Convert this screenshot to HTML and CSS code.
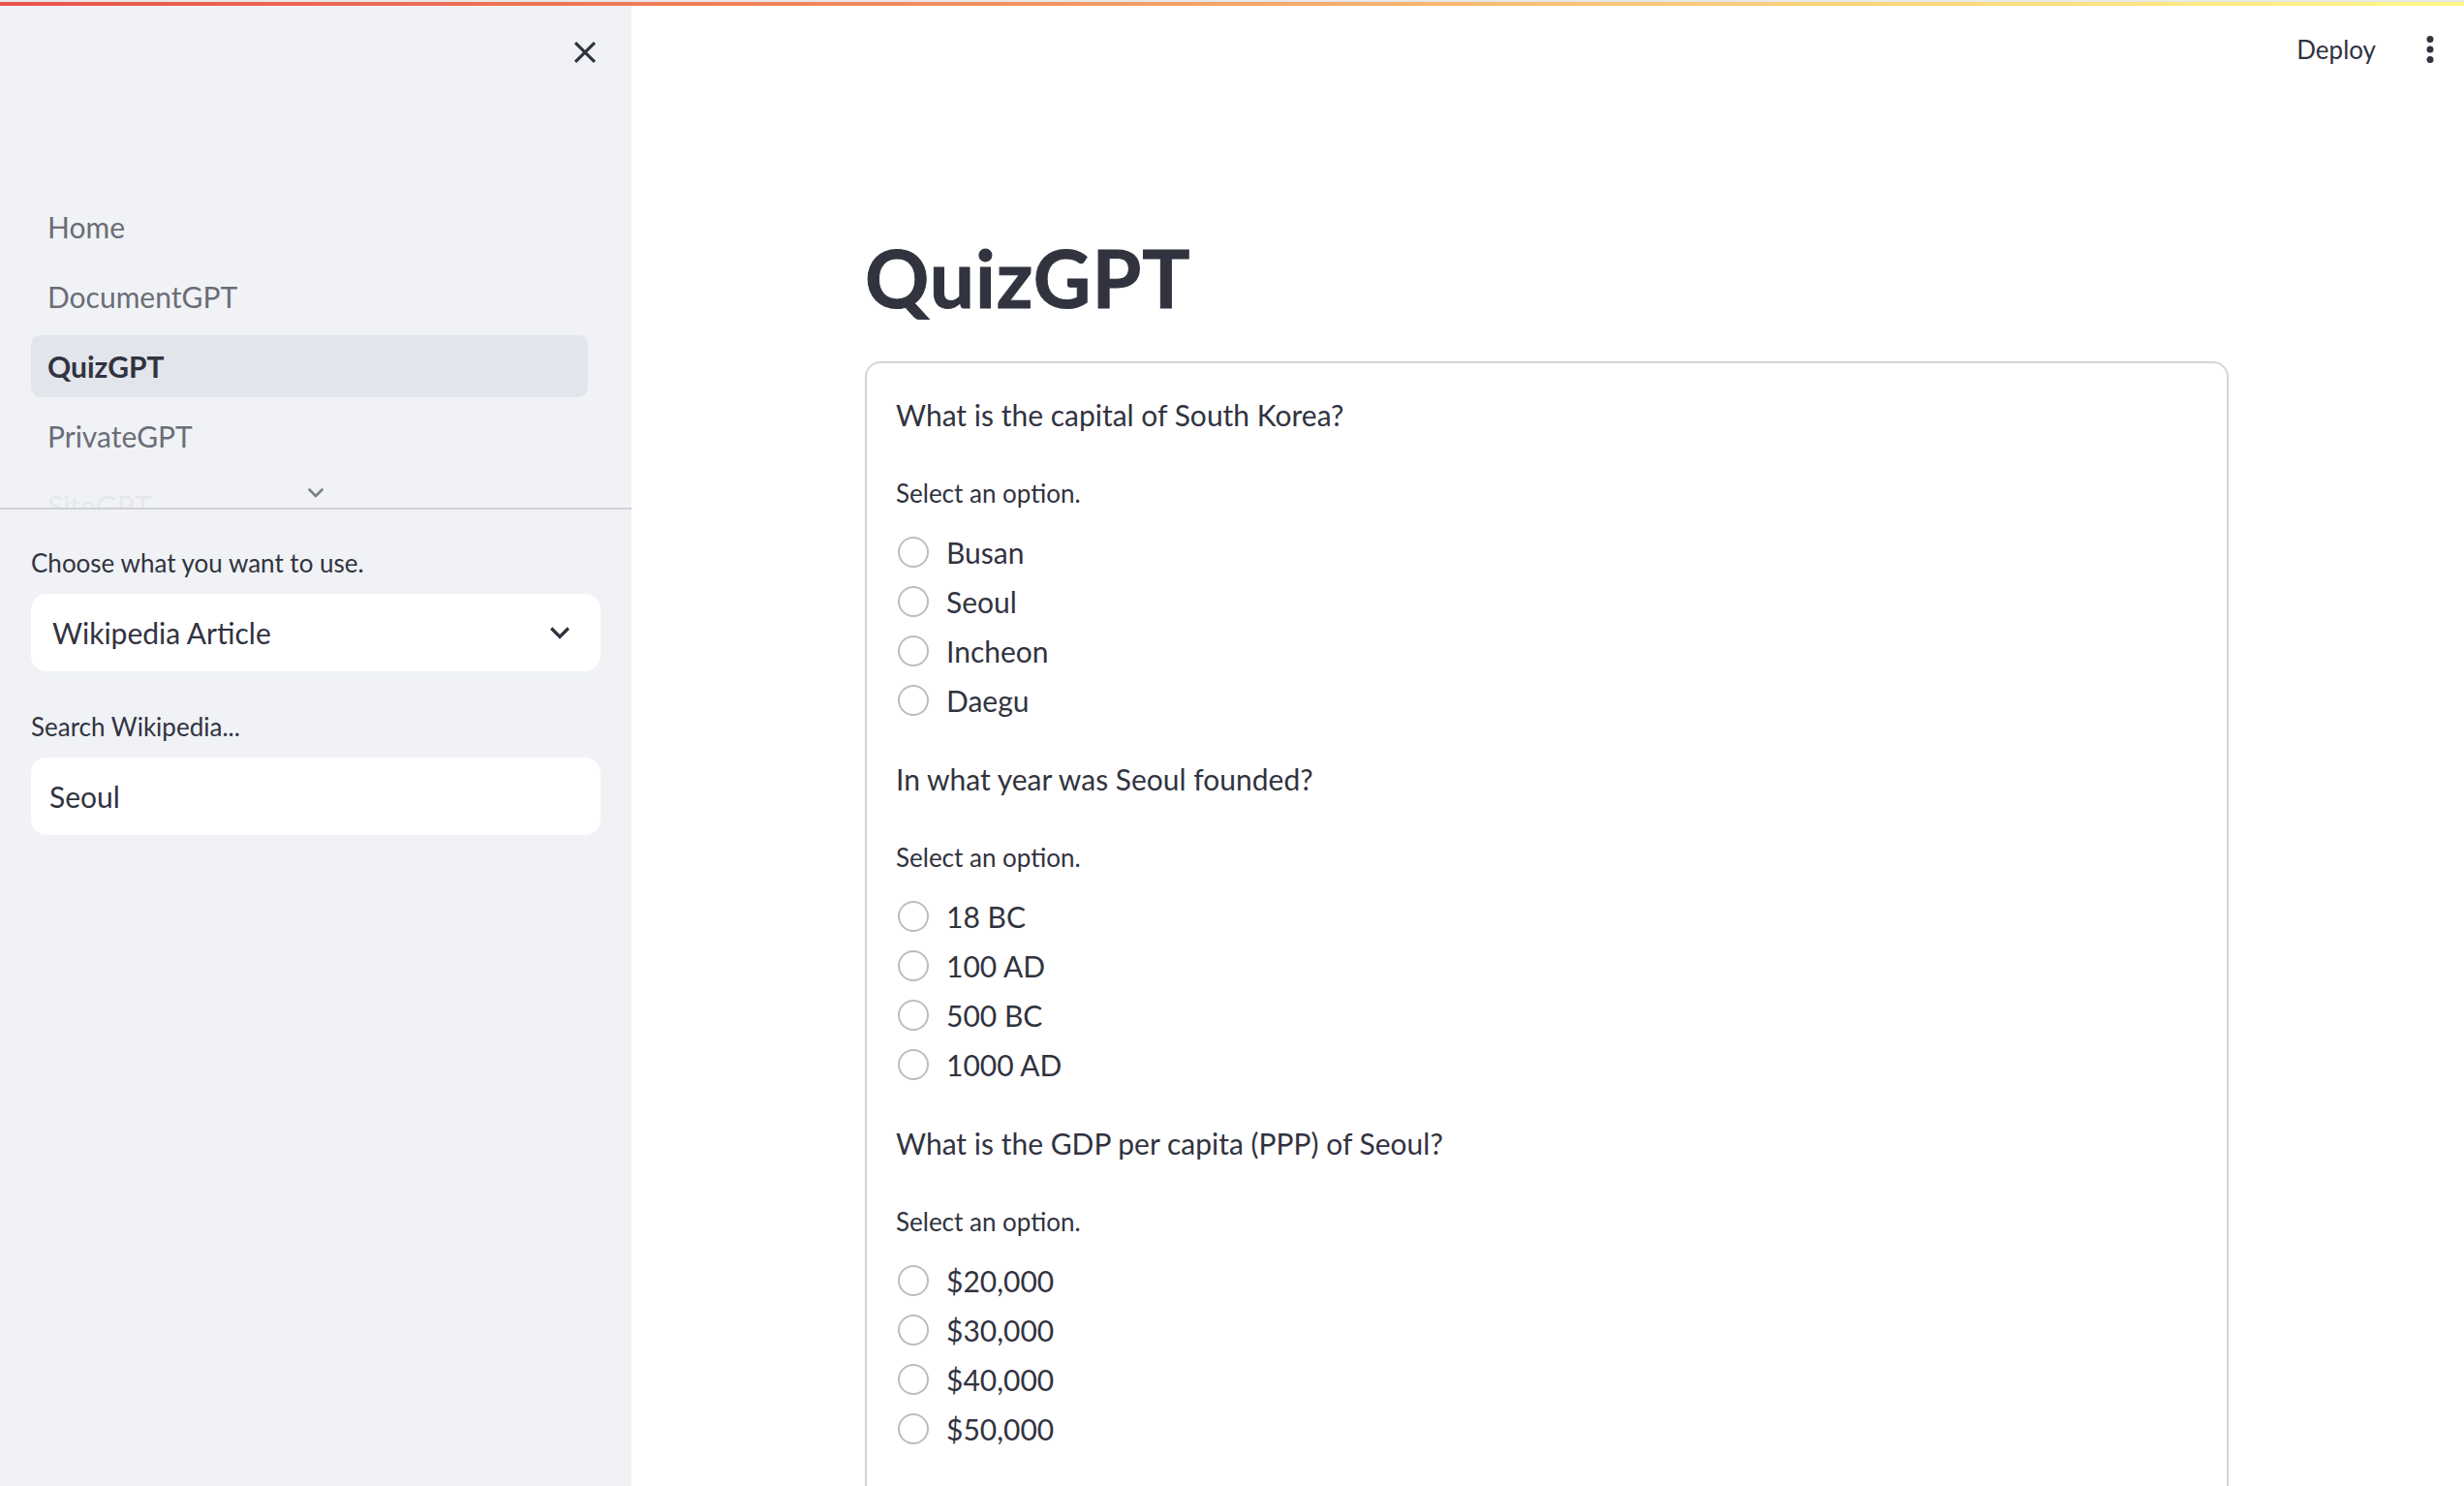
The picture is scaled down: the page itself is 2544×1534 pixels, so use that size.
FILE: index.html
```html
<!DOCTYPE html>
<html lang="en">
<head>
<meta charset="utf-8">
<title>QuizGPT</title>
<link rel="stylesheet" href="styles.css">
</head>
<body>
<div class="decoration"></div>
<div class="app">
  <aside class="sidebar">
    <div class="sidebar-header">
      <button class="icon-btn close-btn" aria-label="Close sidebar">
        <svg viewBox="0 0 24 24" width="38" height="38"><path fill="#31333f" d="M19 6.41L17.59 5 12 10.59 6.41 5 5 6.41 10.59 12 5 17.59 6.41 19 12 13.41 17.59 19 19 17.59 13.41 12z"/></svg>
      </button>
    </div>
    <nav class="nav">
      <ul class="nav-list">
        <li class="nav-item">Home</li>
        <li class="nav-item">DocumentGPT</li>
        <li class="nav-item active">QuizGPT</li>
        <li class="nav-item">PrivateGPT</li>
        <li class="nav-item">SiteGPT</li>
      </ul>
      <div class="nav-fade"></div>
      <div class="nav-more">
        <svg viewBox="0 0 16 10" width="16" height="10"><polyline points="1.5,1.5 8,8 14.5,1.5" fill="none" stroke="#7b7d86" stroke-width="2.6" stroke-linecap="round" stroke-linejoin="round"/></svg>
      </div>
    </nav>
    <div class="sidebar-body">
      <div class="field">
        <div class="field-label">Choose what you want to use.</div>
        <div class="select">
          <span>Wikipedia Article</span>
          <svg viewBox="0 0 24 24" width="40" height="40"><path fill="#31333f" d="M16.59 8.59L12 13.17 7.41 8.59 6 10l6 6 6-6z"/></svg>
        </div>
      </div>
      <div class="field">
        <div class="field-label">Search Wikipedia...</div>
        <div class="text-input">Seoul</div>
      </div>
    </div>
  </aside>

  <main class="main">
    <header class="toolbar">
      <button class="deploy">Deploy</button>
      <button class="icon-btn kebab" aria-label="Main menu">
        <svg viewBox="0 0 24 24" width="42" height="42"><circle cx="12" cy="6" r="2" fill="#31333f"/><circle cx="12" cy="12" r="2" fill="#31333f"/><circle cx="12" cy="18" r="2" fill="#31333f"/></svg>
      </button>
    </header>

    <div class="block">
      <h1 class="title">QuizGPT</h1>
      <div class="quiz">
        <section class="question">
          <p class="q-text">What is the capital of South Korea?</p>
          <div class="q-label">Select an option.</div>
          <div class="options">
            <div class="option"><span class="radio"></span><span>Busan</span></div>
            <div class="option"><span class="radio"></span><span>Seoul</span></div>
            <div class="option"><span class="radio"></span><span>Incheon</span></div>
            <div class="option"><span class="radio"></span><span>Daegu</span></div>
          </div>
        </section>
        <section class="question">
          <p class="q-text">In what year was Seoul founded?</p>
          <div class="q-label">Select an option.</div>
          <div class="options">
            <div class="option"><span class="radio"></span><span>18 BC</span></div>
            <div class="option"><span class="radio"></span><span>100 AD</span></div>
            <div class="option"><span class="radio"></span><span>500 BC</span></div>
            <div class="option"><span class="radio"></span><span>1000 AD</span></div>
          </div>
        </section>
        <section class="question">
          <p class="q-text">What is the GDP per capita (PPP) of Seoul?</p>
          <div class="q-label">Select an option.</div>
          <div class="options">
            <div class="option"><span class="radio"></span><span>$20,000</span></div>
            <div class="option"><span class="radio"></span><span>$30,000</span></div>
            <div class="option"><span class="radio"></span><span>$40,000</span></div>
            <div class="option"><span class="radio"></span><span>$50,000</span></div>
          </div>
        </section>
      </div>
    </div>
  </main>
</div>
</body>
</html>
```

FILE: styles.css
```css
* { box-sizing: border-box; }

html, body {
  margin: 0;
  padding: 0;
  height: 100%;
}

body {
  font-family: Lato, "Open Sans", sans-serif;
  color: #31333f;
  background: #ffffff;
  overflow: hidden;
  display: flex;
  flex-direction: column;
}

.decoration {
  height: 6px;
  flex: 0 0 auto;
  border-top: 2px solid #e8e8e8;
  background: linear-gradient(90deg, #e9524c 0%, #f2905f 40%, #f8c476 65%, #fff888 100%);
}

.app {
  flex: 1 1 auto;
  display: flex;
  min-height: 0;
}

button {
  font-family: inherit;
  background: none;
  border: none;
  padding: 0;
  color: inherit;
  cursor: pointer;
}

.icon-btn {
  display: flex;
  align-items: center;
  justify-content: center;
}

/* ---------- Sidebar ---------- */
.sidebar {
  width: 652px;
  flex: 0 0 652px;
  background: #f0f2f6;
  display: flex;
  flex-direction: column;
}

.sidebar-header {
  height: 70px;
  padding: 26px 26px 0 0;
  display: flex;
  justify-content: flex-end;
}

.close-btn {
  width: 44px;
  height: 44px;
}

.nav {
  margin-top: 126px;
  height: 324px;
  border-bottom: 2px solid #cfd1d6;
  overflow: hidden;
  position: relative;
}

.nav-list {
  list-style: none;
  margin: 0 45px 0 32px;
  padding: 0;
  display: flex;
  flex-direction: column;
  gap: 8px;
}

.nav-item {
  height: 64px;
  padding-left: 17px;
  display: flex;
  align-items: center;
  border-radius: 10px;
  font-size: 30px;
  color: #6b6d77;
}

.nav-item.active {
  background: #e2e5ec;
  color: #31333f;
  font-weight: 700;
}

.nav-fade {
  position: absolute;
  left: 0;
  right: 0;
  bottom: 0;
  height: 60px;
  background: linear-gradient(to bottom, rgba(240, 242, 246, 0) 0%, rgba(240, 242, 246, 0.88) 55%, rgba(240, 242, 246, 0.93) 100%);
}

.nav-more {
  position: absolute;
  left: 318px;
  bottom: 10px;
  width: 16px;
  height: 10px;
  display: flex;
}

.sidebar-body {
  padding: 35px 32px 0;
}

.field {
  margin-bottom: 37px;
}

.field-label {
  font-size: 26px;
  line-height: 40px;
  margin-bottom: 12px;
  color: #31333f;
}

.select,
.text-input {
  height: 80px;
  background: #ffffff;
  border-radius: 16px;
  display: flex;
  align-items: center;
  font-size: 30px;
  color: #31333f;
}

.select {
  padding: 0 22px 0 22px;
  justify-content: space-between;
}

.text-input {
  padding-left: 19px;
}

/* ---------- Main ---------- */
.main {
  flex: 1 1 auto;
  display: flex;
  flex-direction: column;
  min-width: 0;
}

.toolbar {
  height: 90px;
  flex: 0 0 90px;
  display: flex;
  justify-content: flex-end;
  align-items: center;
  padding-right: 14px;
}

.deploy {
  font-size: 26px;
  color: #31333f;
  margin-right: 35px;
}

.kebab {
  width: 42px;
  height: 42px;
}

.block {
  width: 1406px;
  margin: 0 auto;
  padding-top: 142px;
}

.title {
  margin: 0 0 39px -2px;
  font-size: 82px;
  line-height: 96px;
  font-weight: 700;
  color: #31333f;
  letter-spacing: 1px;
  -webkit-text-stroke: 1px #31333f;
}

.quiz {
  margin-left: -2px;
  border: 2px solid #d6d6d9;
  border-radius: 16px;
  padding: 30px;
}

.question {
  margin-bottom: 33px;
}

.q-text {
  margin: 0 0 38px;
  font-size: 30px;
  line-height: 46px;
}

.q-label {
  font-size: 26px;
  line-height: 40px;
  margin-bottom: 15px;
}

.options {
  display: flex;
  flex-direction: column;
}

.option {
  height: 51px;
  display: flex;
  align-items: center;
  font-size: 30px;
}

.radio {
  width: 32px;
  height: 32px;
  border: 2px solid #bcbdc2;
  border-radius: 50%;
  margin-left: 2px;
  margin-right: 18px;
  flex: 0 0 auto;
  background: #ffffff;
}
```
